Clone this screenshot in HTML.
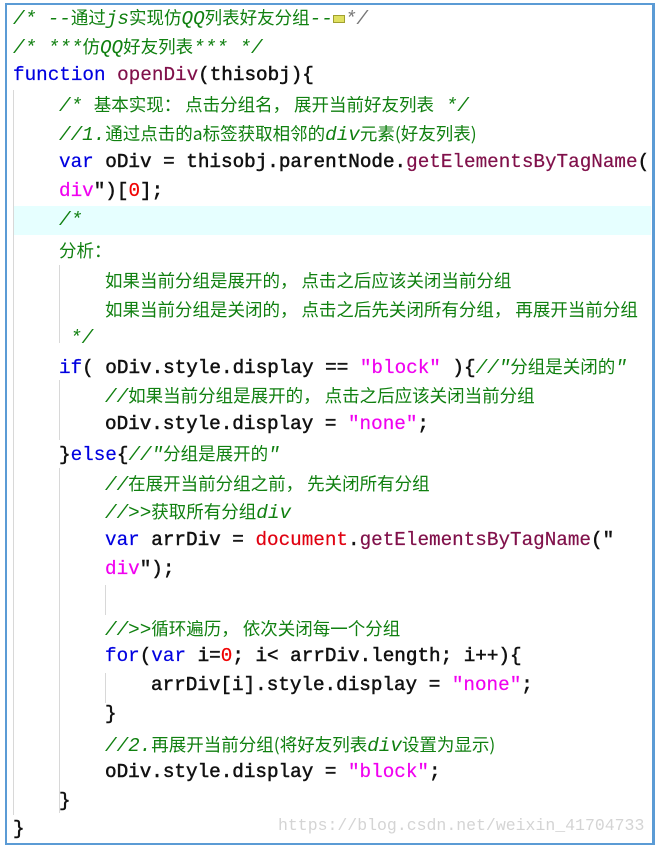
<!DOCTYPE html>
<html><head><meta charset="utf-8"><style>
html,body{margin:0;padding:0;background:#fff;width:659px;height:849px;overflow:hidden;position:relative}
.box{position:absolute;left:5px;top:3px;width:645px;height:838px;border:2px solid #5b9bd5;border-right-width:3px}
.hl{position:absolute;left:13px;top:206px;width:638px;height:29px;background:#e6ffff}
.g{position:absolute;width:1px;background:#d8d8d8}
.l{position:absolute;white-space:pre;font-family:"Liberation Mono","Noto Sans CJK SC",monospace;font-size:19.3px;font-weight:normal;-webkit-text-stroke:0.5px #111;color:#111;line-height:29px;height:29px}
.c{color:#108010;font-style:italic;-webkit-text-stroke:0}
.c .z{font-style:normal;font-family:"Noto Sans CJK SC",sans-serif;font-size:17.5px;-webkit-text-stroke:0}
.k{color:#0000e0;-webkit-text-stroke:0.2px #0000e0}
.f{color:#80104a;-webkit-text-stroke:0.2px #80104a}
.s{color:#f000f0;-webkit-text-stroke:0.2px #f000f0}
.n{color:#f00000;-webkit-text-stroke:0.2px #f00000}
.r{color:#e00010;-webkit-text-stroke:0.2px #e00010}
.wm{position:absolute;left:278px;top:816px;font-family:"Liberation Mono",monospace;font-size:16.5px;color:#d4d4d4;white-space:pre}
</style></head><body>
<div class="box"></div>
<div class="hl"></div>
<div class="g" style="left:13px;top:90px;height:725px"></div>
<div class="g" style="left:59px;top:265px;height:78px"></div>
<div class="g" style="left:59px;top:380px;height:60px"></div>
<div class="g" style="left:59px;top:468px;height:345px"></div>
<div class="g" style="left:105px;top:585px;height:30px"></div>
<div class="g" style="left:105px;top:673px;height:30px"></div>

<div class="l" style="left:13px;top:3px"><span class="c">/* --<span class="z">通过</span>js<span class="z">实现仿</span>QQ<span class="z">列表好友分组</span>--<span style="display:inline-block;width:10px;height:6px;background:#e0e060;border:1px solid #a0a030;vertical-align:middle"></span><span style="color:#777">*/</span></span></div>
<div class="l" style="left:13px;top:32px"><span class="c">/* ***<span class="z">仿</span>QQ<span class="z">好友列表</span>*** */</span></div>
<div class="l" style="left:13px;top:61px"><span class="k">function</span> <span class="f">openDiv</span>(thisobj){</div>
<div class="l" style="left:59px;top:90px"><span class="c">/* <span class="z">基本实现： 点击分组名， 展开当前好友列表</span> */</span></div>
<div class="l" style="left:59px;top:119px"><span class="c">//1.<span class="z">通过点击的a标签获取相邻的</span>div<span class="z">元素(好友列表)</span></span></div>
<div class="l" style="left:59px;top:148px"><span class="k">var</span> oDiv = thisobj.parentNode.<span class="f">getElementsByTagName</span>(</div>
<div class="l" style="left:59px;top:177px"><span class="s">div</span>")[<span class="n">0</span>];</div>
<div class="l" style="left:59px;top:206px"><span class="c">/*</span></div>
<div class="l" style="left:59px;top:236px"><span class="c"><span class="z">分析：</span></span></div>
<div class="l" style="left:105px;top:266px"><span class="c"><span class="z">如果当前分组是展开的， 点击之后应该关闭当前分组</span></span></div>
<div class="l" style="left:105px;top:295px"><span class="c"><span class="z">如果当前分组是关闭的， 点击之后先关闭所有分组， 再展开当前分组</span></span></div>
<div class="l" style="left:70px;top:324px"><span class="c">*/</span></div>
<div class="l" style="left:59px;top:352px"><span class="k">if</span>( oDiv.style.display == <span class="s">"block"</span> ){<span class="c">//"<span class="z">分组是关闭的</span>"</span></div>
<div class="l" style="left:105px;top:381px"><span class="c">//<span class="z">如果当前分组是展开的， 点击之后应该关闭当前分组</span></span></div>
<div class="l" style="left:105px;top:410px">oDiv.style.display = <span class="s">"none"</span>;</div>
<div class="l" style="left:59px;top:439px">}<span class="k">else</span>{<span class="c">//"<span class="z">分组是展开的</span>"</span></div>
<div class="l" style="left:105px;top:469px"><span class="c">//<span class="z">在展开当前分组之前， 先关闭所有分组</span></span></div>
<div class="l" style="left:105px;top:497px"><span class="c">//&gt;&gt;<span class="z">获取所有分组</span>div</span></div>
<div class="l" style="left:105px;top:526px"><span class="k">var</span> arrDiv = <span class="r">document</span>.<span class="f">getElementsByTagName</span>("</div>
<div class="l" style="left:105px;top:555px"><span class="s">div</span>");</div>
<div class="l" style="left:105px;top:614px"><span class="c">//&gt;&gt;<span class="z">循环遍历， 依次关闭每一个分组</span></span></div>
<div class="l" style="left:105px;top:642px"><span class="k">for</span>(<span class="k">var</span> i=<span class="n">0</span>; i&lt; arrDiv.length; i++){</div>
<div class="l" style="left:151px;top:671px">arrDiv[i].style.display = <span class="s">"none"</span>;</div>
<div class="l" style="left:105px;top:700px">}</div>
<div class="l" style="left:105px;top:730px"><span class="c">//2.<span class="z">再展开当前分组(将好友列表</span>div<span class="z">设置为显示)</span></span></div>
<div class="l" style="left:105px;top:758px">oDiv.style.display = <span class="s">"block"</span>;</div>
<div class="l" style="left:59px;top:787px">}</div>
<div class="l" style="left:13px;top:815px">}</div>
<div class="wm">https://blog.csdn.net/weixin_41704733</div>
</body></html>
